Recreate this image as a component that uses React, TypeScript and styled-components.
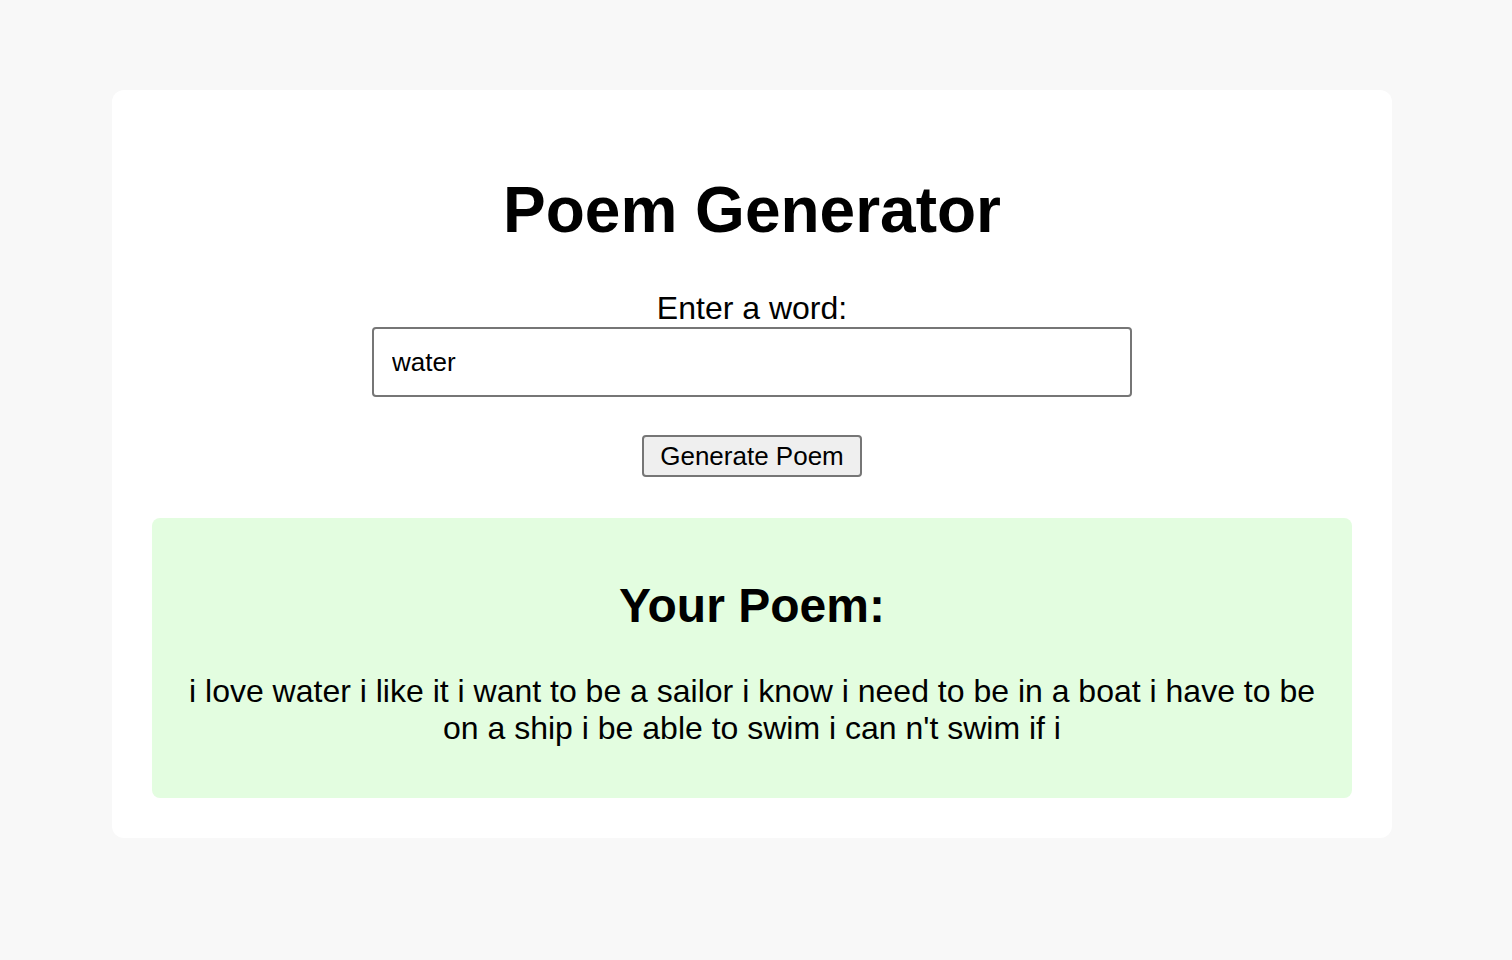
import React, { useState } from "react";
import styled, { createGlobalStyle } from "styled-components";

const GlobalStyle = createGlobalStyle`
  html, body {
    margin: 0;
    padding: 0;
    background: #f8f8f8;
    font-family: "Liberation Sans", Arial, Helvetica, sans-serif;
    color: #000;
  }
`;

export default function App() {
  // STATE
  const [word, setWord] = useState("water");
  const poem =
    "i love water i like it i want to be a sailor i know i need to be in a boat i have to be on a ship i be able to swim i can n't swim if i";

  return (
    <>
      <GlobalStyle />
      <s.Page>
        <s.Card>
          <s.Title>Poem Generator</s.Title>
          <s.Label htmlFor="word">Enter a word:</s.Label>
          <s.Input id="word" value={word} onChange={(e) => setWord(e.target.value)} />
          <s.Button type="button">Generate Poem</s.Button>
          <s.Result>
            <s.ResultTitle>Your Poem:</s.ResultTitle>
            <s.PoemText>{poem}</s.PoemText>
          </s.Result>
        </s.Card>
      </s.Page>
    </>
  );
}

const s = {
  Page: styled.div`
    padding: 90px 8px 0 0;
    min-height: 870px;
  `,
  Card: styled.div`
    display: flex;
    flex-direction: column;
    align-items: center;

    width: 1280px;
    box-sizing: border-box;
    margin: 0 auto;
    padding: 40px;

    background: #ffffff;
    border-radius: 12px;
    text-align: center;
  `,
  Title: styled.h1`
    margin: 43px 0;
    font-size: 64px;
    font-weight: 700;
    line-height: normal;
  `,
  Label: styled.label`
    display: block;
    font-size: 32px;
    line-height: normal;
  `,
  Input: styled.input`
    box-sizing: border-box;
    width: 760px;
    height: 70px;
    padding: 0 18px;

    border: 2px solid #767676;
    border-radius: 4px;

    font-family: inherit;
    font-size: 26px;
    color: #000;
    outline: none;
  `,
  Button: styled.button`
    box-sizing: border-box;
    height: 42px;
    margin-top: 38px;
    padding: 0 16px;

    background: #efefef;
    border: 2px solid #767676;
    border-radius: 4px;

    font-family: inherit;
    font-size: 26px;
    color: #000;
    cursor: pointer;
  `,
  Result: styled.div`
    align-self: stretch;
    margin-top: 41px;
    padding: 20px;

    background: #e3fde0;
    border-radius: 8px;
  `,
  ResultTitle: styled.h2`
    margin: 40px 0;
    font-size: 48px;
    font-weight: 700;
    line-height: normal;
  `,
  PoemText: styled.p`
    margin: 32px 16px 31px;
    font-size: 32px;
    line-height: normal;
  `,
};
